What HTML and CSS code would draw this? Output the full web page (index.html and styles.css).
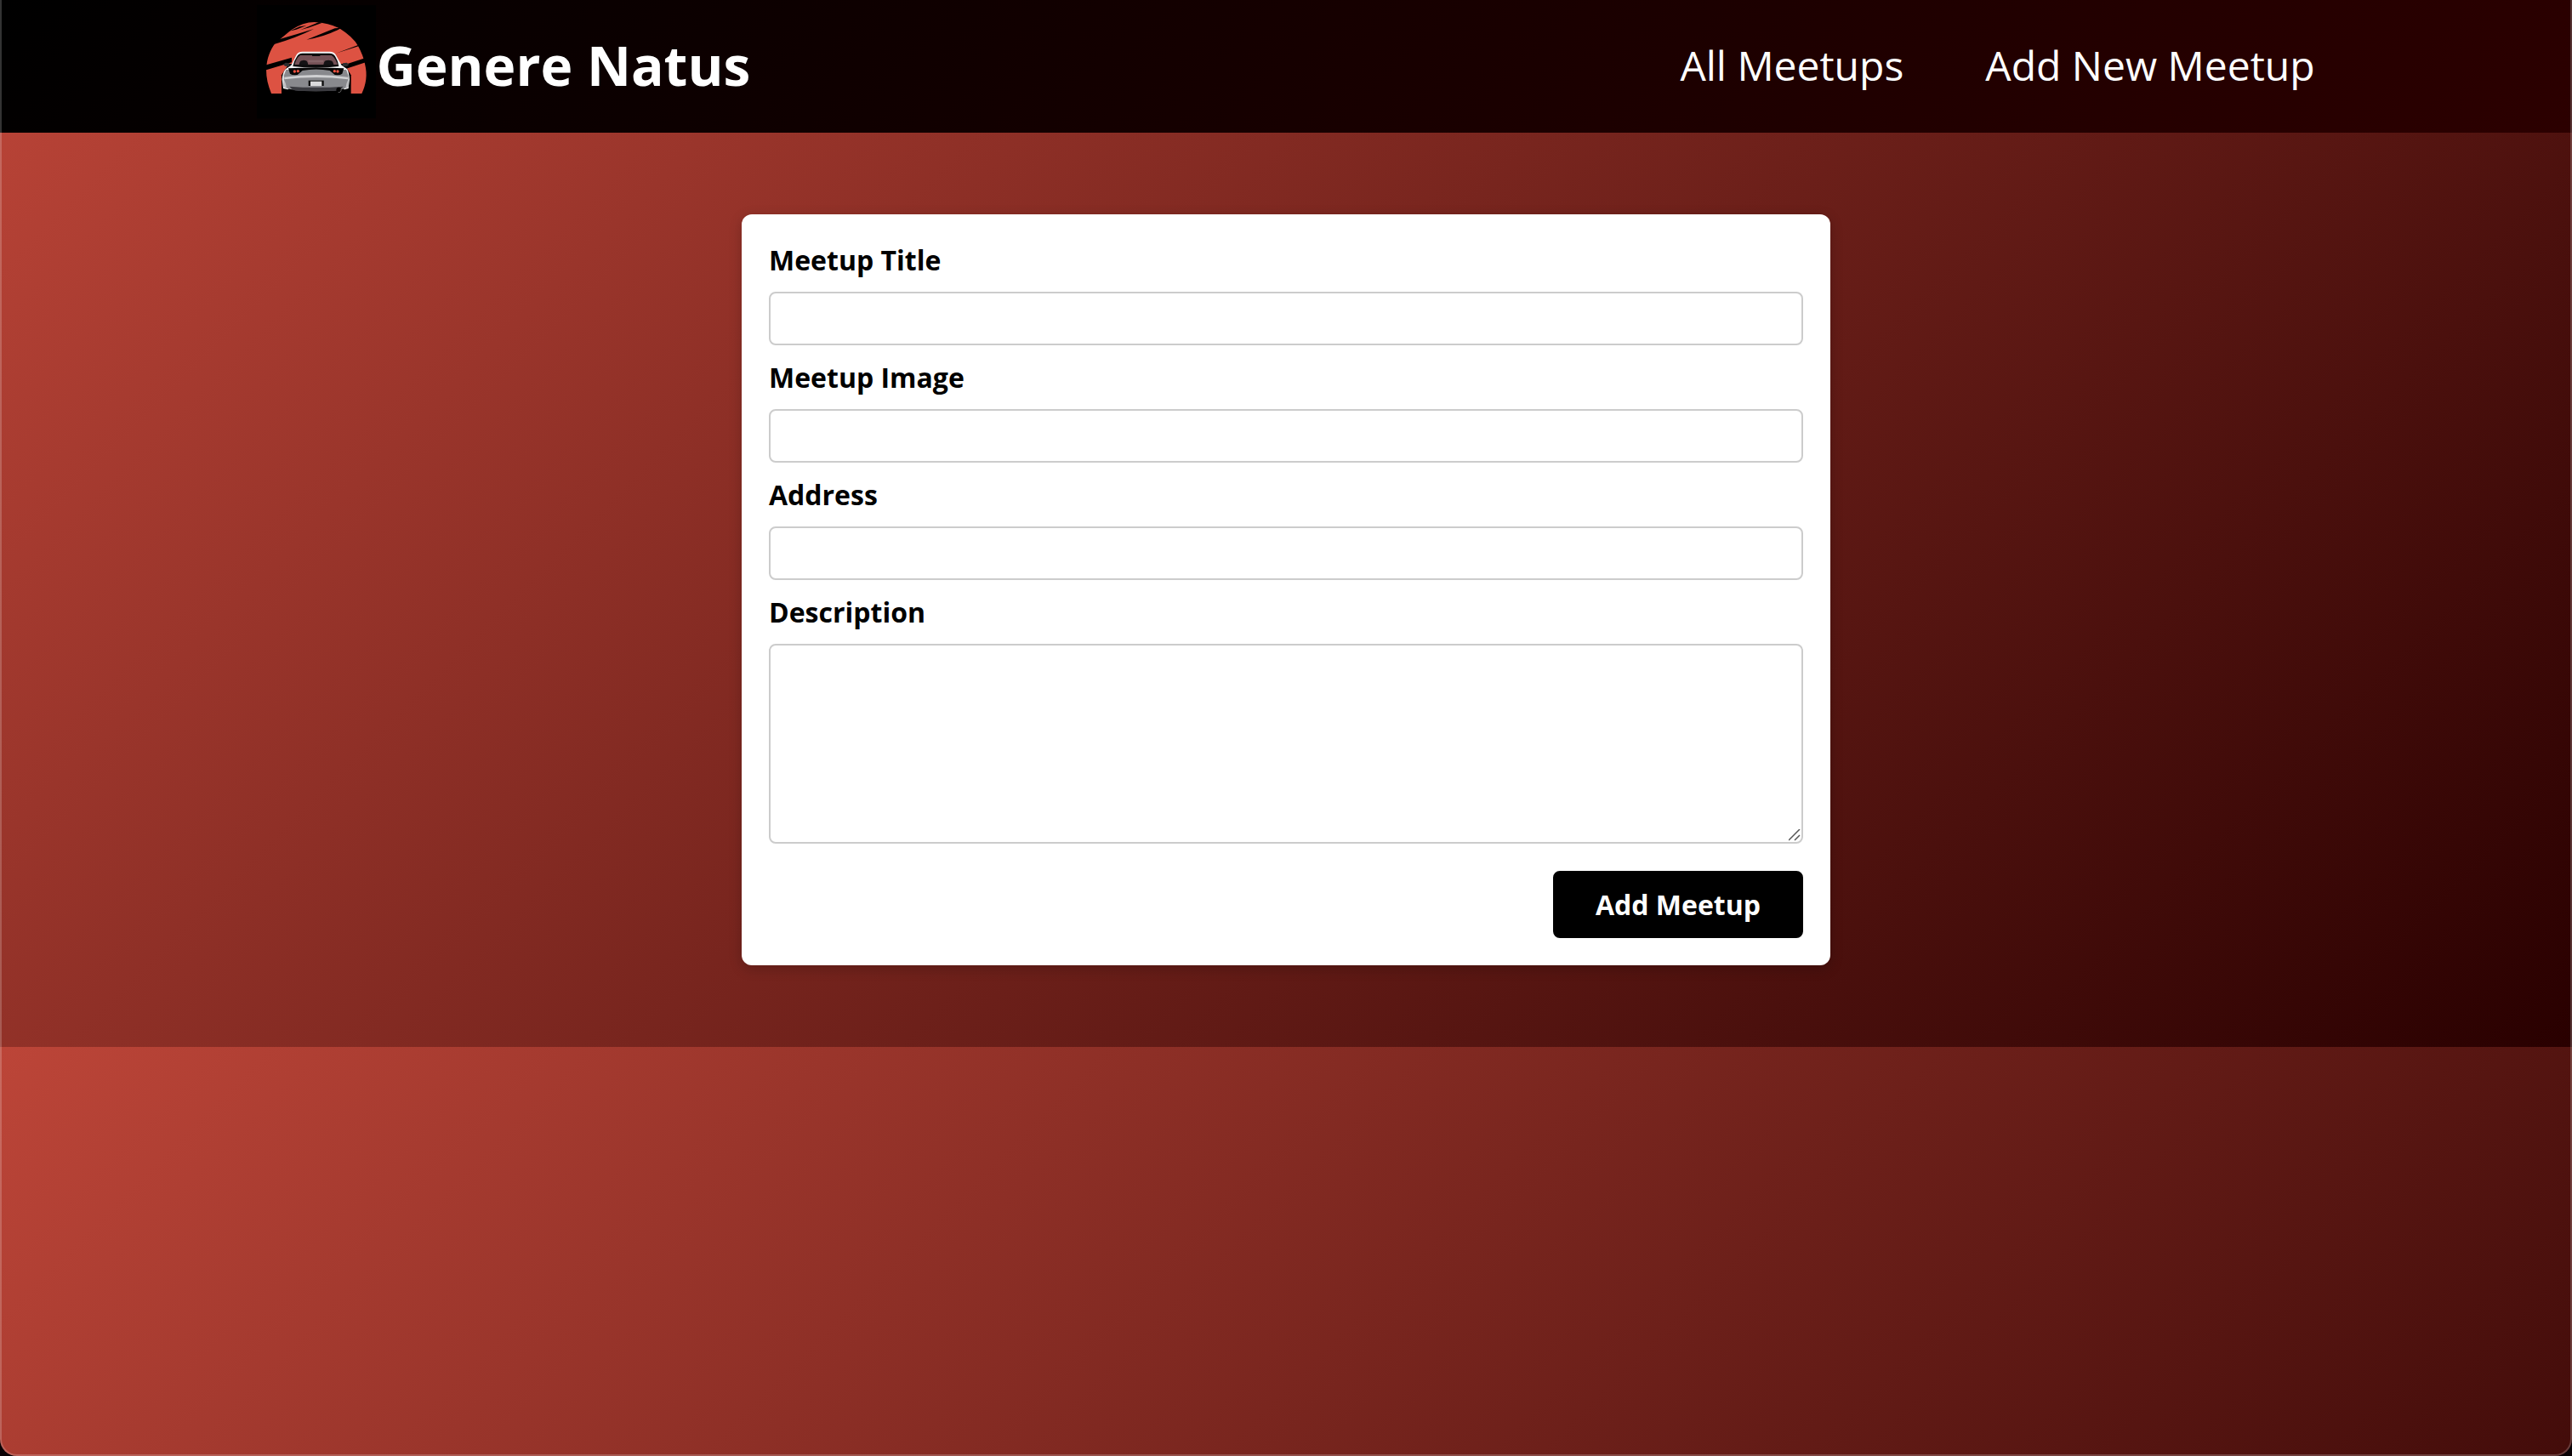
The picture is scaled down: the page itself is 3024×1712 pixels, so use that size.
FILE: index.html
```html
<!DOCTYPE html>
<html lang="en">
<head>
<meta charset="utf-8">
<meta name="viewport" content="width=device-width, initial-scale=1">
<title>Genere Natus</title>
<link rel="stylesheet" href="styles.css">
</head>
<body>
<div class="page">
  <header class="header">
    <div class="brand">
      <svg class="logo" viewBox="37 -12 420 420" aria-hidden="true">
        <path d="M37-12h420v400H37z" fill="#000"/>
        <!-- sun -->
        <path d="M88 300C76 270 70 245 70 215C72 175 84 145 102 122L158 76Q200 48 240 48Q290 50 328 70Q376 100 394 132Q412 165 418 195C428 235 422 268 407 300Z" fill="#dd5242"/>
        <!-- brush gaps -->
        <g fill="#000">
          <path d="M98 126L110 110Q175 92 238 72Q175 104 98 126Z"/>
          <path d="M156 78L188 64L212 60L176 74L150 80Z"/>
          <path d="M190 76L256 48L268 50L222 67Z"/>
          <path d="M212 110L312 70L336 68L322 76Q268 102 212 110Z"/>
          <path d="M316 158L396 128L398 132Z"/>
          <path d="M60 202L160 173L160 190L60 220Z"/>
          <path d="M350 197L430 171L430 187L350 213Z"/>
          <path d="M124 300V235L150 195H345L369 235V300Z"/>
        </g>
        <!-- mirrors -->
        <path d="M130 197L138 191L152 193V204L136 203ZM362 197L354 191L340 193V204L356 203Z" fill="#2c2c2e"/>
        <!-- body -->
        <path d="M176 164Q182 152 198 152H294Q310 152 316 164L336 200L356 214Q362 226 364 250L360 282L346 286L334 276H158L146 286L130 282L126 250Q128 226 138 214L158 200Z" fill="#f3f3f4"/>
        <!-- rear window -->
        <path d="M178 170Q184 158 198 158H292Q308 158 314 170Q324 186 326 204Q246 214 164 204Q168 184 178 170Z" fill="#0c0c0d"/>
        <path d="M170 198Q176 174 190 165H232V168H260V165H300Q314 174 322 198Z" fill="#745156"/>
        <path d="M186 198Q188 184 196 184Q202 180 210 184Q216 186 218 198ZM272 198Q274 186 280 184Q290 180 298 184Q306 186 308 198Z" fill="#141214"/>
        <path d="M218 182H272V190H218Z" fill="#866468"/>
        <!-- bumper and lamp band -->
        <path d="M140 216L352 216L360 236V276L340 284Q246 300 150 284L132 276V236Z" fill="#88898d"/>
        <path d="M148 211Q246 206 344 211L338 230Q330 236 312 234L294 219Q246 212 198 219L180 234Q162 236 154 230Z" fill="#070707"/>
        <path d="M134 242Q246 226 358 242V250Q246 236 134 250Z" fill="#cfd0d2"/>
        <path d="M132 250Q140 262 142 284L132 276ZM360 250Q352 262 350 284L360 276Z" fill="#bfc0c3"/>
        <path d="M152 275Q246 282 342 275Q330 291 310 291H184Q164 291 152 275Z" fill="#3b3b40"/>
        <!-- plate -->
        <path d="M219 254H273V273H219Z" fill="#0b0b0b"/>
        <path d="M226 257H266V273H226Z" fill="#dadadb"/>
        <g fill="#f0513f">
          <circle cx="170" cy="222" r="5"/><circle cx="182" cy="221" r="5"/>
          <circle cx="311" cy="221" r="5"/><circle cx="322" cy="222" r="5"/>
        </g>
        <!-- exhaust -->
        <circle cx="326" cy="287" r="9" fill="#000"/>
        <path d="M334 284Q336 296 324 296" fill="none" stroke="#999" stroke-width="2"/>
      </svg>
      <span class="brand-name">Genere Natus</span>
    </div>
    <nav>
      <ul class="nav-list">
        <li><a href="#all">All Meetups</a></li>
        <li><a href="#new">Add New Meetup</a></li>
      </ul>
    </nav>
  </header>
  <main class="main">
    <form class="card">
      <div class="control">
        <label for="title">Meetup Title</label>
        <input type="text" id="title">
      </div>
      <div class="control">
        <label for="image">Meetup Image</label>
        <input type="url" id="image">
      </div>
      <div class="control">
        <label for="address">Address</label>
        <input type="text" id="address">
      </div>
      <div class="control">
        <label for="description">Description</label>
        <textarea id="description" rows="5"></textarea>
      </div>
      <div class="actions">
        <button type="button">Add Meetup</button>
      </div>
    </form>
  </main>
</div>
<div class="window-edge"></div>
</body>
</html>
```

FILE: styles.css
```css
* {
  box-sizing: border-box;
}

/* The gradient tiles below the content, once per page height. */
body {
  margin: 0;
  font-family: "Open Sans", "Noto Sans", sans-serif;
  background: linear-gradient(135deg, #bc4538, #290000);
}

.header {
  display: flex;
  align-items: center;
  justify-content: space-between;
  height: 156px;
  padding: 0 10% 4px;
  background: linear-gradient(135deg, #000, #2c0000);
}

.brand {
  display: flex;
  align-items: center;
}

.logo {
  width: 140px;
  height: 140px;
}

.brand-name {
  color: #fff;
  font-size: 64px;
  font-weight: 700;
}

.nav-list {
  display: flex;
  gap: 96px;
  margin: 0;
  padding: 0;
  list-style: none;
}

.nav-list a {
  color: #fff;
  font-size: 48px;
  text-decoration: none;
}

.main {
  padding: 96px 32px;
}

.card {
  width: 100%;
  max-width: 1280px;
  margin: 0 auto;
  padding: 32px;
  border-radius: 12px;
  background: #fff;
  box-shadow: 0 4px 16px rgba(0, 0, 0, 0.2);
}

.control {
  margin-bottom: 16px;
}

.control label {
  display: block;
  margin-bottom: 16px;
  font-size: 32px;
  line-height: 43px;
  font-weight: 700;
}

.control input,
.control textarea {
  display: block;
  width: 100%;
  padding: 8px;
  border: 2px solid #ccc;
  border-radius: 8px;
  background: #fff;
  font: inherit;
  font-size: 32px;
  line-height: 43px;
}

.control input {
  height: 63px;
}

.control textarea {
  height: 235px;
}

.control textarea::-webkit-resizer {
  background: url("data:image/svg+xml,%3Csvg xmlns='http://www.w3.org/2000/svg' viewBox='0 0 15 15'%3E%3Cpath d='M0 13L13 0M7 13L13 7' stroke='%23555' stroke-width='1.5' fill='none'/%3E%3C/svg%3E") no-repeat;
}

.actions {
  margin-top: 32px;
  text-align: right;
}

.actions button {
  display: inline-block;
  vertical-align: top;
  padding: 16px 48px;
  border: 2px solid #000;
  border-radius: 8px;
  background: #000;
  color: #fff;
  font: inherit;
  font-size: 32px;
  line-height: 43px;
  font-weight: 700;
}

/* Light hairline and rounded lower corners around the viewport. */
.window-edge {
  position: fixed;
  inset: 0;
  border: 2px solid rgba(255, 255, 255, 0.2);
  border-top: 0;
  border-radius: 0 0 20px 20px;
  box-shadow: 0 0 0 20px #0a0205;
  pointer-events: none;
}
```
